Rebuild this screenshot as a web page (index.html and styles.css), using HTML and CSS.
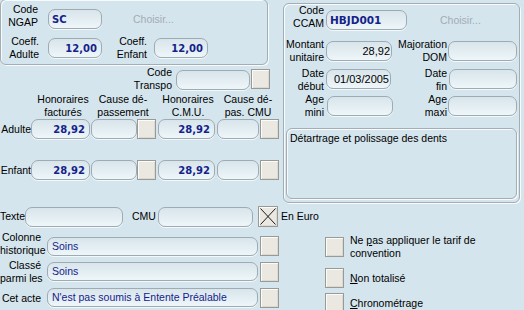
FILE: index.html
```html
<!DOCTYPE html>
<html lang="fr">
<head>
    <meta charset="UTF-8">
    <meta name="viewport" content="width=device-width, initial-scale=1.0">
    <title>Acte - Tarification</title>
    <link rel="stylesheet" href="styles.css">
</head>
<body>
<div class="top">
    <div class="left-col">
        <div class="grp grp-ngap">
            <div class="row ngap-r1">
                <div class="lbl2 l-ngap">Code<br>NGAP</div>
                <div class="fld code f-ngap">SC</div>
                <div class="choisir ch-ngap">Choisir...</div>
            </div>
            <div class="row ngap-r2">
                <div class="lbl2 l-coefa">Coeff.<br>Adulte</div>
                <div class="fld num f-coefa">12,00</div>
                <div class="lbl2 l-coefe">Coeff.<br>Enfant</div>
                <div class="fld num f-coefe">12,00</div>
            </div>
        </div>

        <div class="row transpo">
            <div class="lbl2 l-transpo">Code<br>Transpo</div>
            <div class="fld f-transpo"></div>
            <div class="btn b-transpo"></div>
        </div>

        <div class="hon-head">
            <div class="hh hh1">Honoraires<br>facturés</div>
            <div class="hh hh2">Cause dé-<br>passement</div>
            <div class="hh hh3">Honoraires<br>C.M.U.</div>
            <div class="hh hh4">Cause dé-<br>pas. CMU</div>
        </div>

        <div class="hon-row">
            <div class="hon-lbl">Adulte</div>
            <div class="fld num hf1">28,92</div>
            <div class="fld hf2"></div>
            <div class="btn"></div>
            <div class="fld num hf3">28,92</div>
            <div class="fld hf4"></div>
            <div class="btn hb4"></div>
        </div>
        <div class="hon-row enfant">
            <div class="hon-lbl">Enfant</div>
            <div class="fld num hf1">28,92</div>
            <div class="fld hf2"></div>
            <div class="btn"></div>
            <div class="fld num hf3">28,92</div>
            <div class="fld hf4"></div>
            <div class="btn hb4"></div>
        </div>
    </div>

    <div class="grp grp-ccam">
        <div class="row ccam-r1">
            <div class="lbl2 cl">Code<br>CCAM</div>
            <div class="fld code f-ccam">HBJD001</div>
            <div class="choisir ch-ccam">Choisir...</div>
        </div>
        <div class="row ccam-r2">
            <div class="lbl2 cl">Montant<br>unitaire</div>
            <div class="fld plain f-montant">28,92</div>
            <div class="lbl2 cl-maj">Majoration<br>DOM</div>
            <div class="fld f-maj"></div>
        </div>
        <div class="row ccam-r3">
            <div class="lbl2 cl">Date<br>début</div>
            <div class="fld plain f-date">01/03/2005</div>
            <div class="lbl2 cl-fin">Date<br>fin</div>
            <div class="fld f-fin"></div>
        </div>
        <div class="row ccam-r4">
            <div class="lbl2 cl">Age<br>mini</div>
            <div class="fld f-mini"></div>
            <div class="lbl2 cl-maxi">Age<br>maxi</div>
            <div class="fld f-maxi"></div>
        </div>
        <div class="memo">Détartrage et polissage des dents</div>
    </div>
</div>

<div class="mid">
    <div class="lbl1 l-texte">Texte</div>
    <div class="fld f-texte"></div>
    <div class="lbl1 l-cmu">CMU</div>
    <div class="fld f-cmu"></div>
    <div class="btn xbox">
        <svg width="18" height="19" viewBox="0 0 18 19"><path d="M1.5 1.5L16.5 17.5M16.5 1.5L1.5 17.5" stroke="#1a1a1a" stroke-width="1" fill="none"/></svg>
    </div>
    <div class="lbl1 l-euro">En Euro</div>
</div>

<div class="bottom">
    <div class="left-bottom">
        <div class="row hist">
            <div class="lbl2 l-hist">Colonne<br>historique</div>
            <div class="fld text f-long">Soins</div>
            <div class="btn b-long"></div>
        </div>
        <div class="row classe">
            <div class="lbl2 l-hist">Classé<br>parmi les</div>
            <div class="fld text f-long">Soins</div>
            <div class="btn b-long"></div>
        </div>
        <div class="row acte">
            <div class="lbl1 l-hist">Cet acte</div>
            <div class="fld text f-long">N'est pas soumis à Entente Préalable</div>
            <div class="btn b-long"></div>
        </div>
    </div>
    <div class="opts">
        <div class="opt opt1">
            <div class="btn"></div>
            <div class="opt-lbl">Ne <u>p</u>as appliquer le tarif de<br>convention</div>
        </div>
        <div class="opt opt2">
            <div class="btn"></div>
            <div class="opt-lbl"><u>N</u>on totalisé</div>
        </div>
        <div class="opt opt3">
            <div class="btn"></div>
            <div class="opt-lbl"><u>C</u>hronométrage</div>
        </div>
    </div>
</div>
</body>
</html>
```

FILE: styles.css
```css
body {
    margin: 0;
    width: 524px;
    height: 310px;
    overflow: hidden;
    background-color: #d5e5ed;
    font-family: "Liberation Sans", Arial, sans-serif;
    font-size: 10.5px;
    line-height: 13px;
    color: #000;
}

/* generic pieces */
.row {
    display: flex;
    align-items: flex-start;
}
.lbl2 {
    text-align: right;
    line-height: 13px;
    white-space: nowrap;
}
.lbl1 {
    line-height: 20px;
    white-space: nowrap;
}
.fld {
    box-sizing: border-box;
    height: 20px;
    border: 1px solid #9eabb3;
    border-radius: 7px;
    background: linear-gradient(#d8e5eb, #eef6f9);
    box-shadow: 0 1px 0 #f3f9fb;
    display: flex;
    align-items: center;
    padding: 0 4px;
    color: #14228a;
    white-space: nowrap;
    overflow: hidden;
}
.fld.num {
    justify-content: flex-end;
    font-family: "DejaVu Sans", sans-serif;
    font-weight: bold;
    font-size: 10px;
}
.fld.code {
    font-family: "DejaVu Sans", sans-serif;
    font-weight: bold;
    font-size: 10px;
    padding-left: 3px;
}
.fld.plain {
    justify-content: flex-end;
    color: #000;
    font-size: 11px;
    padding-right: 1px;
}
.btn {
    box-sizing: border-box;
    width: 19px;
    height: 20px;
    flex: none;
    background-color: #ebe8e2;
    border: 1px solid #999996;
    box-shadow: inset 1px 1px 0 #fbfbfa, inset -1px -1px 0 #dcd9d2;
}
.choisir {
    color: #a3acb4;
    line-height: 20px;
}
.grp {
    box-sizing: border-box;
    border: 1px solid #a3adb3;
    border-radius: 6px;
    box-shadow: inset 1px 1px 0 #f7fbfd, 1px 1px 0 #f7fbfd;
}

/* layout */
.top {
    display: flex;
    height: 203px;
}
.left-col {
    width: 280px;
    flex: none;
}

/* NGAP box */
.grp-ngap {
    width: 268px;
    height: 66px;
    margin-top: -1px;
}
.ngap-r1 { margin-top: 3px; }
.l-ngap { width: 37px; }
.f-ngap { width: 54px; margin: 6px 0 0 10px; }
.ch-ngap { margin: 6px 0 0 31px; }
.ngap-r2 { margin-top: 6px; }
.l-coefa { width: 38px; }
.f-coefa { width: 54px; margin: 3px 0 0 9px; }
.l-coefe { width: 40px; margin-left: 5px; }
.f-coefe { width: 54px; margin: 3px 0 0 7px; }

/* transpo */
.transpo { margin-top: 1px; }
.l-transpo { width: 172px; }
.f-transpo { width: 74px; margin: 4px 0 0 4px; }
.b-transpo { margin: 3px 0 0 1px; }

/* honoraires grid */
.hon-head {
    display: flex;
    margin: 1px 0 0 31px;
    text-align: center;
    white-space: nowrap;
}
.hh1 { width: 64px; }
.hh2 { width: 56px; }
.hh3 { width: 60px; margin-left: 7px; }
.hh4 { width: 60px; }
.hon-row {
    display: flex;
    align-items: center;
    height: 20px;
}
.hon-row.enfant { margin-top: 21px; }
.hon-lbl { width: 31px; text-align: right; }
.hf1 { width: 59px; }
.hf2 { width: 46px; margin-left: 1px; }
.hf3 { width: 57px; margin-left: 2px; }
.hf4 { width: 42px; margin-left: 2px; }
.hb4 { margin-left: 1px; }

/* CCAM box */
.grp-ccam {
    width: 237px;
    height: 200px;
    margin: 3px 0 0 3px;
}
.cl { width: 40px; }
.ccam-r1 .f-ccam { width: 81px; margin: 6px 0 0 2px; font-size: 10.5px; }
.ch-ccam { margin: 6px 0 0 33px; }
.ccam-r2 { margin-top: 8px; }
.f-montant { width: 66px; margin: 3px 0 0 2px; }
.cl-maj { width: 55px; }
.f-maj { width: 69px; margin: 3px 0 0 1px; }
.ccam-r3 { margin-top: 3px; }
.f-date { width: 65px; margin: 2px 0 0 2px; }
.cl-fin { width: 56px; }
.f-fin { width: 68px; margin: 2px 0 0 2px; }
.ccam-r4 { margin-top: 0; }
.f-mini { width: 66px; margin: 3px 0 0 3px; }
.cl-maxi { width: 54px; }
.f-maxi { width: 69px; margin: 3px 0 0 1px; }
.memo {
    box-sizing: border-box;
    width: 231px;
    height: 71px;
    margin: 9px 0 0 2px;
    padding: 3px 3px;
    border: 1px solid #a3adb3;
    border-radius: 6px;
    box-shadow: inset 1px 1px 0 #f7fbfd, 1px 1px 0 #f7fbfd;
}

/* Texte / CMU row */
.mid {
    display: flex;
    align-items: flex-start;
    margin-top: 3px;
    height: 21px;
}
.mid .lbl1 { line-height: 21px; }
.l-texte { width: 25px; text-align: right; }
.f-texte { width: 98px; margin-top: 1px; }
.l-cmu { margin-left: 9px; }
.f-cmu { width: 95px; margin: 1px 0 0 2px; }
.xbox {
    width: 20px;
    height: 21px;
    margin-left: 5px;
}
.xbox svg { display: block; }
.l-euro { margin-left: 3px; }

/* lower left rows */
.bottom { display: flex; }
.left-bottom {
    width: 280px;
    flex: none;
}
.l-hist { width: 41px; text-align: right; }
.fld.text { font-size: 10.5px; }
.f-long { width: 211px; height: 19px; margin-left: 6px; }
.b-long { margin-left: 2px; }
.hist { margin-top: 4px; }
.hist .f-long { margin-top: 6px; }
.hist .b-long { margin-top: 5px; }
.classe { margin-top: 2px; }
.classe .f-long { margin-top: 3px; }
.classe .b-long { margin-top: 3px; }
.acte { margin-top: 3px; }

/* options */
.opts {
    margin: 10px 0 0 45px;
}
.opt {
    display: flex;
    align-items: flex-start;
}
.opt-lbl {
    margin-left: 6px;
    white-space: nowrap;
}
.opt1 .opt-lbl { margin-top: -3px; }
.opt2 { margin-top: 8px; }
.opt2 .opt-lbl, .opt3 .opt-lbl { line-height: 20px; }
.opt3 { margin-top: 5px; }
```
